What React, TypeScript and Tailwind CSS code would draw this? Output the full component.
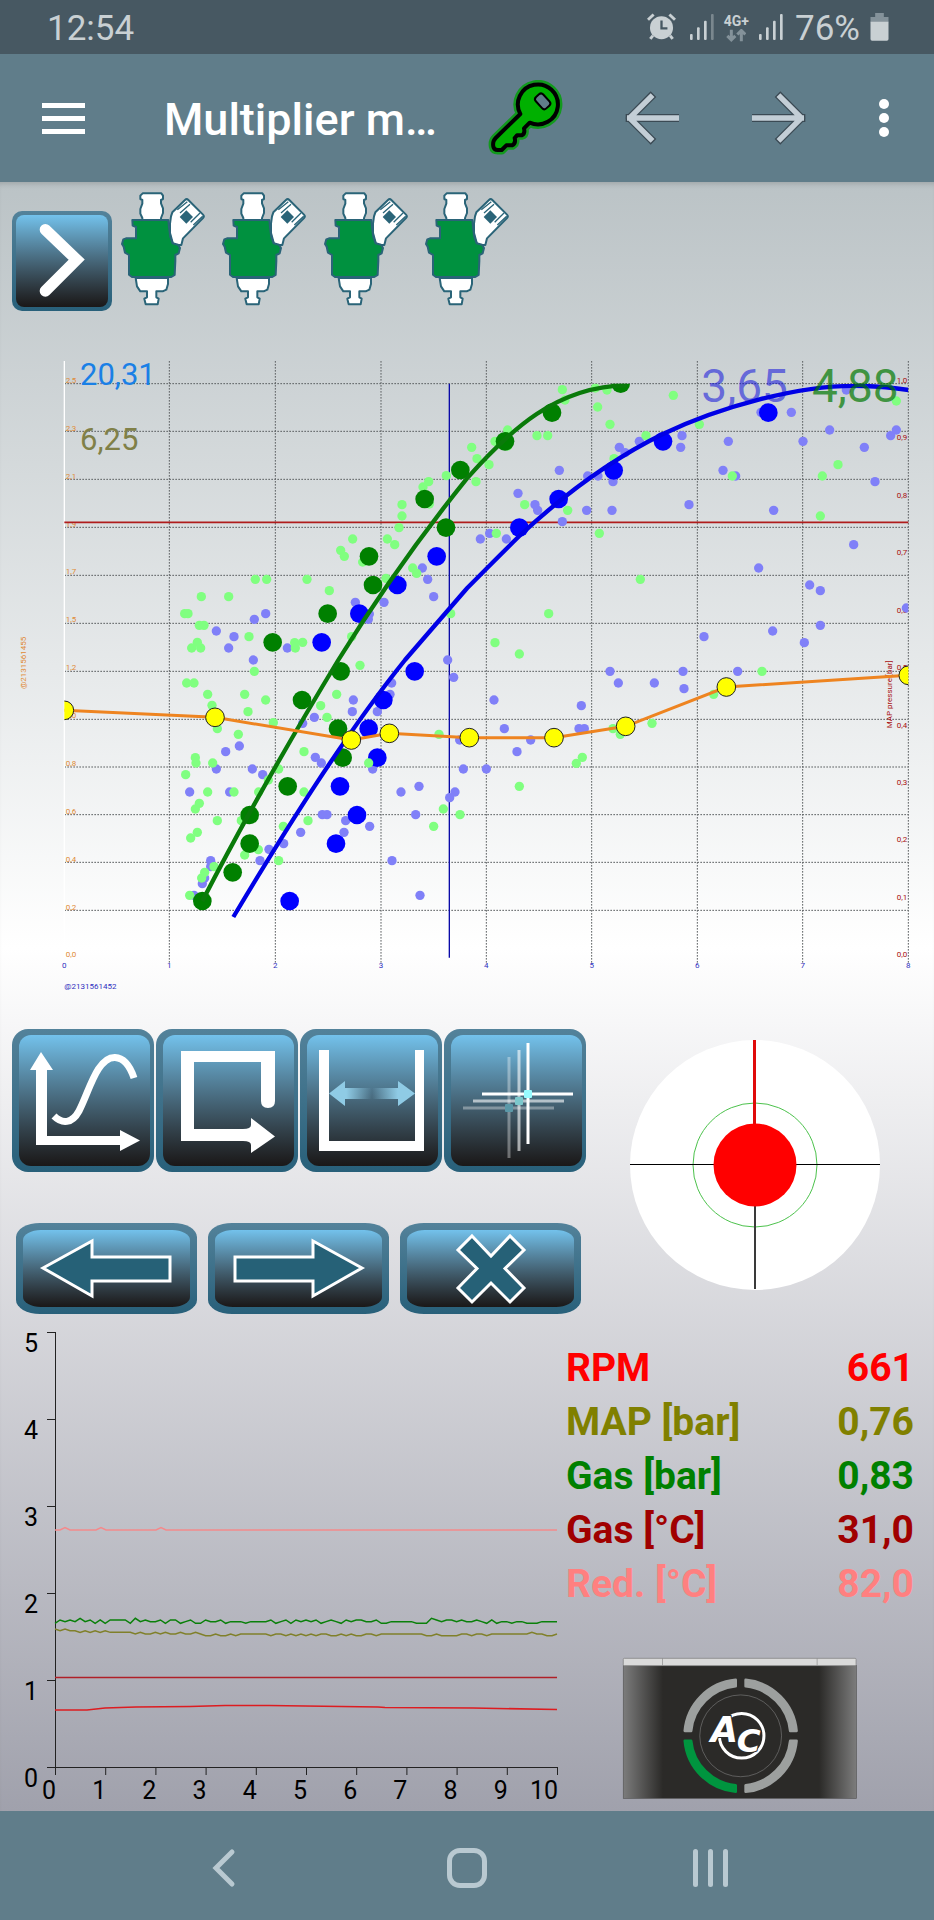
import type { ReactNode } from "react";

type Point = [number, number];

// Map chart data, in chart units (three units to a pixel at full width)
const GAS_SAMPLES: Point[] = [
  [1206, 494], [1206, 528], [1197, 563], [1286, 425], [1269, 441], [1339, 407], [1058, 597], [1162, 597],
  [1184, 614], [1022, 631], [1033, 649], [1088, 666], [766, 718], [800, 718], [921, 718], [988, 752],
  [1158, 715], [1238, 684], [1250, 700], [604, 770], [686, 770], [554, 821], [564, 821], [598, 856],
  [612, 856], [592, 907], [575, 924], [602, 924], [747, 890], [884, 908], [886, 924], [908, 907],
  [1352, 821], [1055, 890], [1080, 976], [763, 994], [1288, 492], [1415, 322], [1431, 356], [1467, 374],
  [1428, 425], [1485, 304], [1523, 270], [1611, 287], [1643, 287], [1687, 149], [1695, 180], [1523, 318],
  [1793, 201], [1786, 144], [1821, 150], [1830, 253], [2020, 166], [2098, 253], [1938, 287], [1842, 356],
  [1574, 494], [1703, 511], [1489, 580], [1798, 580], [1921, 718], [1646, 821], [1485, 908], [1558, 942],
  [2461, 528], [2467, 408], [2514, 374], [2689, 183], [2286, 994], [560, 1029], [582, 1029],
  [623, 1063], [636, 1096], [652, 1166], [734, 1063], [744, 1115], [797, 1080], [820, 1148], [715, 1183],
  [1010, 1063], [962, 1097], [981, 1132], [912, 1235], [586, 1253], [588, 1269], [638, 1269], [557, 1304],
  [836, 1287], [805, 1320], [623, 1356], [702, 1356], [776, 1356], [912, 1356], [598, 1390], [586, 1407],
  [652, 1442], [724, 1442], [924, 1442], [592, 1477], [572, 1494], [850, 1459], [775, 1529], [734, 1545],
  [836, 1562], [642, 1580], [614, 1597], [605, 1614], [569, 1666], [1317, 1183], [1330, 1407],
  [1380, 1424], [1301, 1459], [2141, 1063], [1956, 1150], [1839, 1166], [1861, 1183], [1747, 1252],
  [1729, 1270], [1558, 1339],
];

const PETROL_SAMPLES: Point[] = [
  [1267, 684], [1283, 718], [1301, 770], [1066, 787], [1152, 787], [1108, 822], [1105, 838], [797, 821],
  [763, 838], [649, 873], [702, 890], [686, 924], [862, 924], [760, 960], [1343, 960], [1554, 460],
  [1605, 494], [1613, 511], [1678, 391], [1687, 545], [1441, 597], [1469, 580], [1519, 597], [1760, 511],
  [1763, 408], [1794, 408], [1839, 425], [1836, 511], [1858, 322], [1875, 338], [1918, 304], [2046, 287],
  [2042, 322], [2067, 494], [2169, 391], [2207, 408], [2185, 304], [2283, 217], [2374, 217], [2321, 511],
  [2409, 304], [2489, 270], [2539, 150], [2593, 322], [2625, 425], [2672, 287], [2689, 270], [2561, 614],
  [2276, 684], [2429, 735], [2461, 752], [2461, 856], [2413, 908], [2318, 873], [2112, 890], [2719, 804],
  [1830, 994], [2049, 994], [2213, 994], [1361, 1012], [1175, 1029], [1170, 1063], [1060, 1080],
  [1057, 1115], [1132, 1115], [943, 1132], [908, 1150], [718, 1218], [677, 1235], [649, 1287], [757, 1287],
  [788, 1304], [946, 1252], [964, 1269], [1118, 1287], [1390, 1287], [569, 1356], [689, 1356], [1203, 1356],
  [1257, 1339], [1365, 1356], [1349, 1373], [1247, 1424], [967, 1424], [981, 1424], [1037, 1442],
  [1032, 1477], [1109, 1459], [902, 1477], [851, 1511], [807, 1528], [780, 1562], [632, 1562], [632, 1580],
  [614, 1614], [607, 1631], [582, 1666], [1176, 1562], [1260, 1666], [1379, 1200], [1855, 1029],
  [1963, 1029], [2052, 1046], [1482, 1080], [1744, 1097], [1513, 1166], [1737, 1166], [1753, 1166],
  [1592, 1200], [1551, 1235], [1459, 1287],
];

// gas samples that land on top of a petrol one
const GAS_SAMPLES_TOP: Point[] = [[2197, 408]];

const GAS_POINTS: Point[] = [
  [1381, 390], [1274, 477], [1338, 563], [1107, 649], [1119, 735], [983, 821], [818, 907], [1022, 994],
  [1515, 304], [1656, 218], [1862, 131], [906, 1080], [1014, 1166], [1028, 1253], [863, 1339], [749, 1425],
  [749, 1511], [698, 1597], [607, 1683],
];

const PETROL_POINTS: Point[] = [
  [1310, 649], [1192, 735], [1078, 821], [965, 907], [1244, 994], [1558, 563], [1676, 477], [1841, 391],
  [1989, 304], [2305, 218], [1150, 1080], [1106, 1166], [1132, 1253], [1020, 1339], [1071, 1425],
  [1008, 1511], [869, 1683],
];

const MULTIPLIER: Point[] = [
  [193, 1111], [645, 1132], [1054, 1200], [1168, 1180], [1408, 1193], [1662, 1193], [1877, 1159],
  [2179, 1041], [2725, 1006],
];

const GRID_X = [508, 826, 1143, 1459, 1775, 2092, 2408, 2725];
const GRID_Y = [131, 274, 418, 562, 706, 850, 994, 1138, 1281, 1424, 1567, 1711];
const TIME_LABELS = ["2,5", "2,3", "2,1", "1,9", "1,7", "1,5", "1,2", "1,0", "0,8", "0,6", "0,4", "0,2", "0,0"];
const PRESSURE_LABELS = ["1,0", "0,9", "0,8", "0,7", "0,6", "0,5", "0,4", "0,3", "0,2", "0,1", "0,0"];

// Live traces, one digit per 0.1 s sample
const GAS_TRACE =
  "02121312020222203121120220120021120111011112012021212012102122112001111100032122121121020110110001111";
const MAP_TRACE =
  "43433232323222221211212112112100100101111110110101010110010100110111111111001000011011011111111211001";

const READOUTS = [
  { label: "RPM", value: "661", color: "text-[#ff0000]" },
  { label: "MAP [bar]", value: "0,76", color: "text-[#808000]" },
  { label: "Gas [bar]", value: "0,83", color: "text-[#008000]" },
  { label: "Gas [°C]", value: "31,0", color: "text-[#a00000]" },
  { label: "Red. [°C]", value: "82,0", color: "text-[#ff8080]" },
];

function Dots({ points, r, fill, stroke }: { points: Point[]; r: number; fill: string; stroke?: string }) {
  return (
    <g fill={fill} stroke={stroke} strokeWidth={stroke ? 3 : 0}>
      {points.map(([x, y], i) => (
        <circle key={i} cx={x} cy={y} r={r} />
      ))}
    </g>
  );
}

function Signal({ dimLast }: { dimLast?: boolean }) {
  return (
    <svg viewBox="0 0 72 78" className="h-[26px] w-6" fill="#c9d0d3">
      <rect x="0" y="60" width="8" height="18" rx="3" />
      <rect x="21" y="40" width="8" height="38" rx="3" />
      <rect x="42" y="20" width="8" height="58" rx="3" />
      <rect x="63" y="0" width="8" height="78" rx="3" opacity={dimLast ? 0.4 : 1} />
    </svg>
  );
}

function StatusBar() {
  return (
    <div className="flex h-[54px] items-center justify-between bg-[#475862] pl-[47px] pr-[45px] text-[35px] leading-[54px] text-[#c9d0d3]">
      <span className="pt-1">12:54</span>
      <div className="flex items-center gap-[10px]">
        <svg viewBox="540 42 88 84" className="mr-1 h-7 w-[29px]" fill="#c9d0d3" stroke="#c9d0d3">
          <circle cx="584" cy="86" r="35" stroke="none" />
          <path d="M543 62L560 46M625 62L608 46M558 110L550 120M610 110L618 120" strokeWidth="9" />
          <path d="M584 64V88H602" fill="none" stroke="#475862" strokeWidth="7" />
        </svg>
        <Signal dimLast />
        <div className="flex flex-col items-center">
          <span className="text-[14px] font-bold leading-4">4G+</span>
          <svg viewBox="776 92 60 38" className="h-[13px] w-5" fill="none" stroke="#84929a" strokeWidth="9">
            <path d="M792 94V122M780 112L792 124L804 112M822 128V100M810 108L822 96L834 108" />
          </svg>
        </div>
        <Signal />
        <span className="pl-[2px] pt-1">76%</span>
        <svg viewBox="1208 42 56 84" className="h-7 w-[19px]">
          <path d="M1209 70V54H1223V42H1249V54H1263V70Z" fill="#84929a" />
          <path d="M1209 68H1263V120Q1263 125 1258 125H1214Q1209 125 1209 120Z" fill="#c9d0d3" />
        </svg>
      </div>
    </div>
  );
}

function HeaderArrow({ flip }: { flip?: boolean }) {
  const d = "M556 292L493 355L556 418M493 355H634";
  return (
    <svg viewBox="473 274 168 162" className={flip ? "h-[54px] w-14 -scale-x-100" : "h-[54px] w-14"} fill="none">
      <path d={d} stroke="#3b4a54" strokeWidth="24" strokeLinecap="square" strokeLinejoin="round" />
      <path d={d} stroke="#c3ced6" strokeWidth="16" strokeLinecap="square" strokeLinejoin="round" />
    </svg>
  );
}

function Header() {
  const key =
    "M160 342L86 414Q76 424 79 440Q81 450 92 450L104 450L118 436L136 436Q147 430 143 414L150 406L164 406Q175 402 171 385L188 368A60 60 0 1 0 160 342Z";
  return (
    <header className="flex h-32 items-center bg-[#607d8a] pl-[42px] pr-10">
      <button aria-label="Menu" className="flex h-12 w-[43px] flex-col justify-center gap-2">
        <span className="h-[5px] bg-white" />
        <span className="h-[5px] bg-white" />
        <span className="h-[5px] bg-white" />
      </button>
      <h1 className="ml-[79px] flex-1 truncate pt-1 text-[45px] font-medium leading-[54px] text-white">Multiplier m…</h1>
      <button aria-label="Licence">
        <svg viewBox="60 240 228 228" className="h-[76px] w-[76px]" strokeLinejoin="round">
          <path d={key} fill="#00a810" stroke="#12991d" strokeWidth="27" />
          <path d={key} fill="#00b000" stroke="#000" strokeWidth="12" />
          <rect x="204" y="289" width="46" height="30" rx="9" fill="#607d8a" stroke="#000" strokeWidth="6" transform="rotate(48 227 304)" />
        </svg>
      </button>
      <button aria-label="Back" className="ml-[60px]">
        <HeaderArrow />
      </button>
      <button aria-label="Forward" className="ml-[73px]">
        <HeaderArrow flip />
      </button>
      <button aria-label="More" className="ml-[66px] flex w-5 flex-col items-center gap-1">
        <span className="size-[10px] rounded-full bg-white" />
        <span className="size-[10px] rounded-full bg-white" />
        <span className="size-[10px] rounded-full bg-white" />
      </button>
    </header>
  );
}

function Injector() {
  return (
    <svg viewBox="360 574 258 348" className="h-[116px] w-[86px]" stroke="#2a6478" strokeWidth="6" strokeLinejoin="round">
      <path fill="#fff" d="M428 581H484L489 588V598L483 601V611L489 626V640L483 655V664H427V655L421 642V628L427 612V601L421 598V588Z" />
      <path fill="#fff" d="M555 601Q560 596 565 601L609 645Q614 650 609 655L549 716L544 736H520L510 700V672L513 650L517 638Z" />
      <path fill="none" d="M532 630L562 606M540 640L570 614M572 668L600 640M580 676L608 650" strokeWidth="4" />
      <path fill="#2a6478" stroke="none" d="M559 632L579 652L559 672L539 652Z" />
      <path fill="#00913f" d="M397 661H505L507 682L511 712L518 731L534 735L540 745L536 761L526 766V784L524 826L514 832H396L387 825V766L375 759L371 741L366 733L370 719L378 716H408V682L398 678Z" />
      <path fill="#fff" d="M407 835H504V853L499 870L488 875H469V893L476 897L473 914H437L433 897L441 893V875H421L411 860Z" />
    </svg>
  );
}

function InjectorRow() {
  return (
    <div className="flex h-[158px] items-start pl-3 pt-[9px]">
      <button
        aria-label="Next"
        className="mt-5 size-[100px] rounded-[10px] bg-gradient-to-b from-[#53829a] to-[#28607a] p-1"
      >
        <span className="block size-full rounded-[8px] bg-gradient-to-b from-[#73c2ec] to-[#1a1818]">
          <svg viewBox="48 644 276 276" className="size-full" fill="none" stroke="#fff" strokeWidth="34" strokeLinecap="round">
            <path d="M136 688L230 778L136 872" />
          </svg>
        </span>
      </button>
      <div className="ml-2 grid w-[405px] grid-cols-4">
        <Injector />
        <Injector />
        <Injector />
        <Injector />
      </div>
    </div>
  );
}

function MapChart() {
  return (
    <svg viewBox="0 0 2802 1980" className="block w-full" fontSize="24">
      <defs>
        <clipPath id="plot">
          <rect x="193" y="131" width="2532" height="1722" />
        </clipPath>
      </defs>
      <g stroke="#5c6062" strokeWidth="3" strokeDasharray="5 4">
        {GRID_X.map((x) => (
          <line key={x} x1={x} x2={x} y1="63" y2="1868" />
        ))}
        {GRID_Y.map((y) => (
          <line key={y} x1="193" x2="2725" y1={y} y2={y} />
        ))}
      </g>
      <line x1="193" x2="193" y1="63" y2="1853" stroke="#fff" strokeWidth="4" />

      <g fill="#e08a35">
        {TIME_LABELS.map((t, i) => (
          <text key={t} x="197" y={129 + Math.round(i * 143.6)}>{t}</text>
        ))}
        <text transform="translate(77 1047) rotate(-90)">@2131561455</text>
      </g>
      <g fill="#a81010">
        {PRESSURE_LABELS.map((t, i) => (
          <text key={t} x="2722" y={129 + Math.round(i * 172.3)} textAnchor="end">{t}</text>
        ))}
        <text transform="translate(2675 1165) rotate(-90)">MAP pressure [bar]</text>
      </g>
      <g fill="#3030c0">
        {[193, ...GRID_X].map((x, i) => (
          <text key={x} x={x} y="1883" textAnchor="middle">{i}</text>
        ))}
        <text x="193" y="1947">@2131561452</text>
      </g>

      <line x1="193" x2="2725" y1="547" y2="547" stroke="#b01c1c" strokeWidth="5" />
      <line x1="1348" x2="1348" y1="131" y2="1853" stroke="#0a0aa8" strokeWidth="4" />

      <g clipPath="url(#plot)">
        <Dots points={PETROL_SAMPLES} r={14} fill="#8080f8" />
        <Dots points={GAS_SAMPLES} r={14} fill="#80ff80" />
        <Dots points={GAS_SAMPLES_TOP} r={14} fill="#80ff80" />
        <Dots points={PETROL_POINTS} r={28} fill="#0000ff" />
        <Dots points={GAS_POINTS} r={28} fill="#008000" />
        <Dots points={[[1106, 1269]]} r={14} fill="#80ff80" />
        <path
          d="M607 1683C740 1425 900 1150 1015 960C1130 775 1260 590 1401 415C1530 270 1670 138 1880 136"
          fill="none" stroke="#0a7a0a" strokeWidth="13"
        />
        <path
          d="M700 1731C850 1480 1030 1190 1215 960C1280 885 1340 815 1401 745C1455 690 1510 635 1558 588C1690 465 1840 355 1989 282C2150 205 2400 130 2591 138C2640 139 2680 143 2726 150"
          fill="none" stroke="#0000e6" strokeWidth="13"
        />
        <polyline points={MULTIPLIER.join(" ")} fill="none" stroke="#ee8420" strokeWidth="9" />
        <Dots points={MULTIPLIER} r={28} fill="#ffff00" stroke="#222" />
      </g>

      <text x="240" y="135" fontSize="93" fill="#1a80e6">20,31</text>
      <text x="240" y="329" fontSize="93" fill="#808048">6,25</text>
      <text x="2104" y="186" fontSize="138" fill="#0000dd" fillOpacity="0.52">3,65</text>
      <text x="2436" y="186" fontSize="138" fill="#007800" fillOpacity="0.7">4,88</text>
    </svg>
  );
}

function ToolButton({ label, children }: { label: string; children: ReactNode }) {
  return (
    <button
      aria-label={label}
      className="h-[143px] w-[142px] rounded-[16px] bg-gradient-to-b from-[#53829a] to-[#28607a] pb-[6px] pl-[7px] pr-1 pt-[6px]"
    >
      <span className="block size-full rounded-[12px] bg-gradient-to-b from-[#73c2ec] to-[#1a1818]">
        <svg viewBox="0 0 131 131" className="size-full" fill="#fff">
          {children}
        </svg>
      </span>
    </button>
  );
}

function WideButton({ label, children }: { label: string; children: ReactNode }) {
  return (
    <button
      aria-label={label}
      className="h-[91px] w-[181px] rounded-[24px/14px] bg-gradient-to-b from-[#53829a] to-[#28607a] p-[7px]"
    >
      <span className="block size-full rounded-[18px/10px] bg-gradient-to-b from-[#73c2ec] to-[#1a1818]">
        <svg viewBox="0 0 167 77" className="size-full" fill="#266177" stroke="#fff" strokeWidth="3">
          {children}
        </svg>
      </span>
    </button>
  );
}

function Cross({ x, y, dot, opacity }: { x: number; y: number; dot: string; opacity: number }) {
  return (
    <>
      <path d={`M${x} ${y - 51}V${y + 50}M${x - 46} ${y}H${x + 45}`} stroke="#fff" strokeWidth="3" opacity={opacity} />
      <rect x={x - 4} y={y - 4} width="8" height="8" rx="1" fill={dot} />
    </>
  );
}

function Toolbars() {
  return (
    <div className="pl-3 pt-[29px]">
      <div className="flex gap-[2px]">
        <ToolButton label="Curve">
          <path d="M22 17L34 35H28V101H101V95L121 105.500L101 116V110H17V35H11Z" />
          <path d="M35 81C43 89 53 89 60 76C70 57 78 22 96 22.500C106 23 112 34 115 43" fill="none" stroke="#fff" strokeWidth="7" />
        </ToolButton>
        <ToolButton label="Repeat">
          <path d="M18 16H112V66Q112 73 105 73Q98 73 98 66V27H31V94H80Q88 94 88 90V83L112 101.500L88 118V110Q88 106 80 106H18Z" />
        </ToolButton>
        <ToolButton label="Fit width">
          <defs>
            <linearGradient id="fade">
              <stop offset="0.2" stopColor="#8fcbe5" />
              <stop offset="0.5" stopColor="#8fcbe5" stopOpacity="0" />
              <stop offset="0.8" stopColor="#8fcbe5" />
            </linearGradient>
          </defs>
          <path d="M12 15H22V106H108V15H117V116H12Z" />
          <path d="M22 58.500L38 46V53H91V46L108 58.500L91 71V64H38V71Z" fill="url(#fade)" />
        </ToolButton>
        <ToolButton label="Cursors">
          <Cross x={58} y={73} dot="#5b98a8" opacity={0.35} />
          <Cross x={68} y={66} dot="#7cc8cc" opacity={0.6} />
          <Cross x={77} y={59} dot="#98fbff" opacity={1} />
        </ToolButton>
      </div>
      <div className="ml-1 mt-[51px] flex gap-[11px]">
        <WideButton label="Previous">
          <path d="M20 38L69 11V27H147V51H69V66Z" />
        </WideButton>
        <WideButton label="Next">
          <path d="M147 38L98 11V27H20V51H98V66Z" />
        </WideButton>
        <WideButton label="Cancel">
          <path d="M65 6L84 26L103 6L117 20L98 38.500L117 58L103 72L84 53L65 72L51 58L70 38.500L51 20Z" />
        </WideButton>
      </div>
    </div>
  );
}

function Gauge() {
  return (
    <svg viewBox="0 0 250 250" className="mr-[54px] mt-10 size-[250px] shrink-0">
      <circle cx="125" cy="125" r="125" fill="#fff" />
      <circle cx="125" cy="125" r="62" fill="none" stroke="#4cc24c" />
      <path d="M0 124.500H250" stroke="#000" />
      <path d="M125 125V249" stroke="#3a3a3a" strokeWidth="2" />
      <path d="M124.500 0V125" stroke="#e00a0a" strokeWidth="3" />
      <circle cx="125" cy="125" r="41.500" fill="#ff0000" />
    </svg>
  );
}

function trace(samples: string, base: number) {
  return [...samples].map((s, i) => `${55 + i * 5.02},${base - Number(s) * 1.67}`).join(" ");
}

function LiveChart() {
  return (
    <svg viewBox="0 0 566 497" className="w-[566px] shrink" fontSize="25">
      <g stroke="#222" strokeWidth="1">
        <path d="M55.500 18V461M47 453.500H558" />
        {[0, 1, 2, 3, 4, 5].map((v) => (
          <line key={v} x1="47" x2="55" y1={453.5 - v * 87} y2={453.5 - v * 87} />
        ))}
        {[1, 2, 3, 4, 5, 6, 7, 8, 9, 10].map((v) => (
          <line key={v} x1={55.5 + v * 50.2} x2={55.5 + v * 50.2} y1="453" y2="461" />
        ))}
      </g>
      {[0, 1, 2, 3, 4, 5].map((v) => (
        <text key={v} x="38" y={473 - v * 87} textAnchor="end">{v}</text>
      ))}
      {[0, 1, 2, 3, 4, 5, 6, 7, 8, 9].map((v) => (
        <text key={v} x={49 + v * 50.2} y="485" textAnchor="middle">{v}</text>
      ))}
      <text x="558" y="485" textAnchor="end">10</text>
      <g fill="none" strokeWidth="1.500">
        <path d="M55 216H60L65 213.500L70 216H96L101 213.500L106 216H156L161 213.500L166 216H557" stroke="#f48a8c" />
        <polyline points={trace(GAS_TRACE, 309.3)} stroke="#0a800a" />
        <polyline points={trace(MAP_TRACE, 321.7)} stroke="#80802a" />
        <path d="M55 363.500H557" stroke="#b02028" />
        <path d="M55 396H87L105 394L136 393L190 392.500L225 391.500H269L378 393L385 393.500L473 394L557 395.500" stroke="#dd1c20" />
      </g>
    </svg>
  );
}

function Device() {
  const led = "M-168 -15A169 169 0 0 1 -15 -168V-149A150 150 0 0 0 -149 -15Z";
  return (
    <svg viewBox="66 82 708 430" className="mt-[46px] h-[143px] w-[236px]">
      <defs>
        <linearGradient id="edge">
          <stop offset="0" stopColor="#7c7c7c" />
          <stop offset="0.17" stopColor="#2b2a28" />
          <stop offset="0.84" stopColor="#2b2a28" />
          <stop offset="1" stopColor="#7c7c7c" />
        </linearGradient>
      </defs>
      <rect x="69" y="108" width="701" height="399" fill="url(#edge)" stroke="#555" strokeWidth="2" />
      <rect x="69" y="86" width="700" height="22" rx="3" fill="#dadada" stroke="#777" strokeWidth="2" />
      <path d="M187 86V108M652 86V108" stroke="#888" strokeWidth="2" />
      <g transform="translate(422 319)" strokeWidth="8" strokeLinejoin="round">
        <path d={led} fill="#9da09f" stroke="#9da09f" />
        <path d={led} fill="#9da09f" stroke="#9da09f" transform="rotate(90)" />
        <path d={led} fill="#9da09f" stroke="#9da09f" transform="rotate(180)" />
        <path d={led} fill="#00953f" stroke="#00953f" transform="rotate(270)" />
        <circle r="123" fill="none" stroke="#777" strokeWidth="2" />
        <circle cx="3" r="67" fill="none" stroke="#fff" strokeWidth="9" />
      </g>
      <g
        fontFamily="DejaVu Sans" fontWeight="bold" fontStyle="italic" fill="#fff"
        stroke="#2b2a28" strokeWidth="6" paintOrder="stroke"
      >
        <text x="332" y="338" fontSize="106">A</text>
        <text x="410" y="367" fontSize="98">C</text>
      </g>
    </svg>
  );
}

function Readouts() {
  return (
    <table className="w-full text-[39px] font-bold leading-[54px]">
      <tbody>
        {READOUTS.map((row) => (
          <tr key={row.label} className={row.color}>
            <th scope="row" className="p-0 text-left font-bold">{row.label}</th>
            <td className="p-0 text-right">{row.value}</td>
          </tr>
        ))}
      </tbody>
    </table>
  );
}

function NavBar() {
  return (
    <nav className="h-[109px] bg-[#607d8a] px-[102px]">
      <div className="grid h-full grid-cols-3 place-items-center pt-1">
        <button aria-label="Back">
          <svg viewBox="0 0 24 40" className="h-10 w-6" fill="none" stroke="#b9c9d1" strokeWidth="5" strokeLinecap="round">
            <path d="M20 4L4 20L20 36" />
          </svg>
        </button>
        <button aria-label="Home" className="size-10 rounded-[13px] border-[5px] border-[#b9c9d1]" />
        <button aria-label="Recent apps" className="flex h-[38px] gap-[10px]">
          <span className="w-[5px] rounded-full bg-[#b9c9d1]" />
          <span className="w-[5px] rounded-full bg-[#b9c9d1]" />
          <span className="w-[5px] rounded-full bg-[#b9c9d1]" />
        </button>
      </div>
    </nav>
  );
}

export default function App() {
  return (
    <div className="flex min-h-screen flex-col font-['Roboto',sans-serif]">
      <StatusBar />
      <Header />
      <main className="flex-1 bg-[linear-gradient(to_bottom,#bbc3c6_0%,#ffffff_47%,#a0a1ac_100%)] shadow-[inset_0_5px_5px_-3px_rgba(0,0,0,0.15)]">
        <InjectorRow />
        <MapChart />
        <section className="flex justify-between">
          <Toolbars />
          <Gauge />
        </section>
        <section className="flex items-start">
          <LiveChart />
          <div className="flex flex-1 flex-col items-center pr-5 pt-[27px]">
            <Readouts />
            <Device />
          </div>
        </section>
      </main>
      <NavBar />
    </div>
  );
}
